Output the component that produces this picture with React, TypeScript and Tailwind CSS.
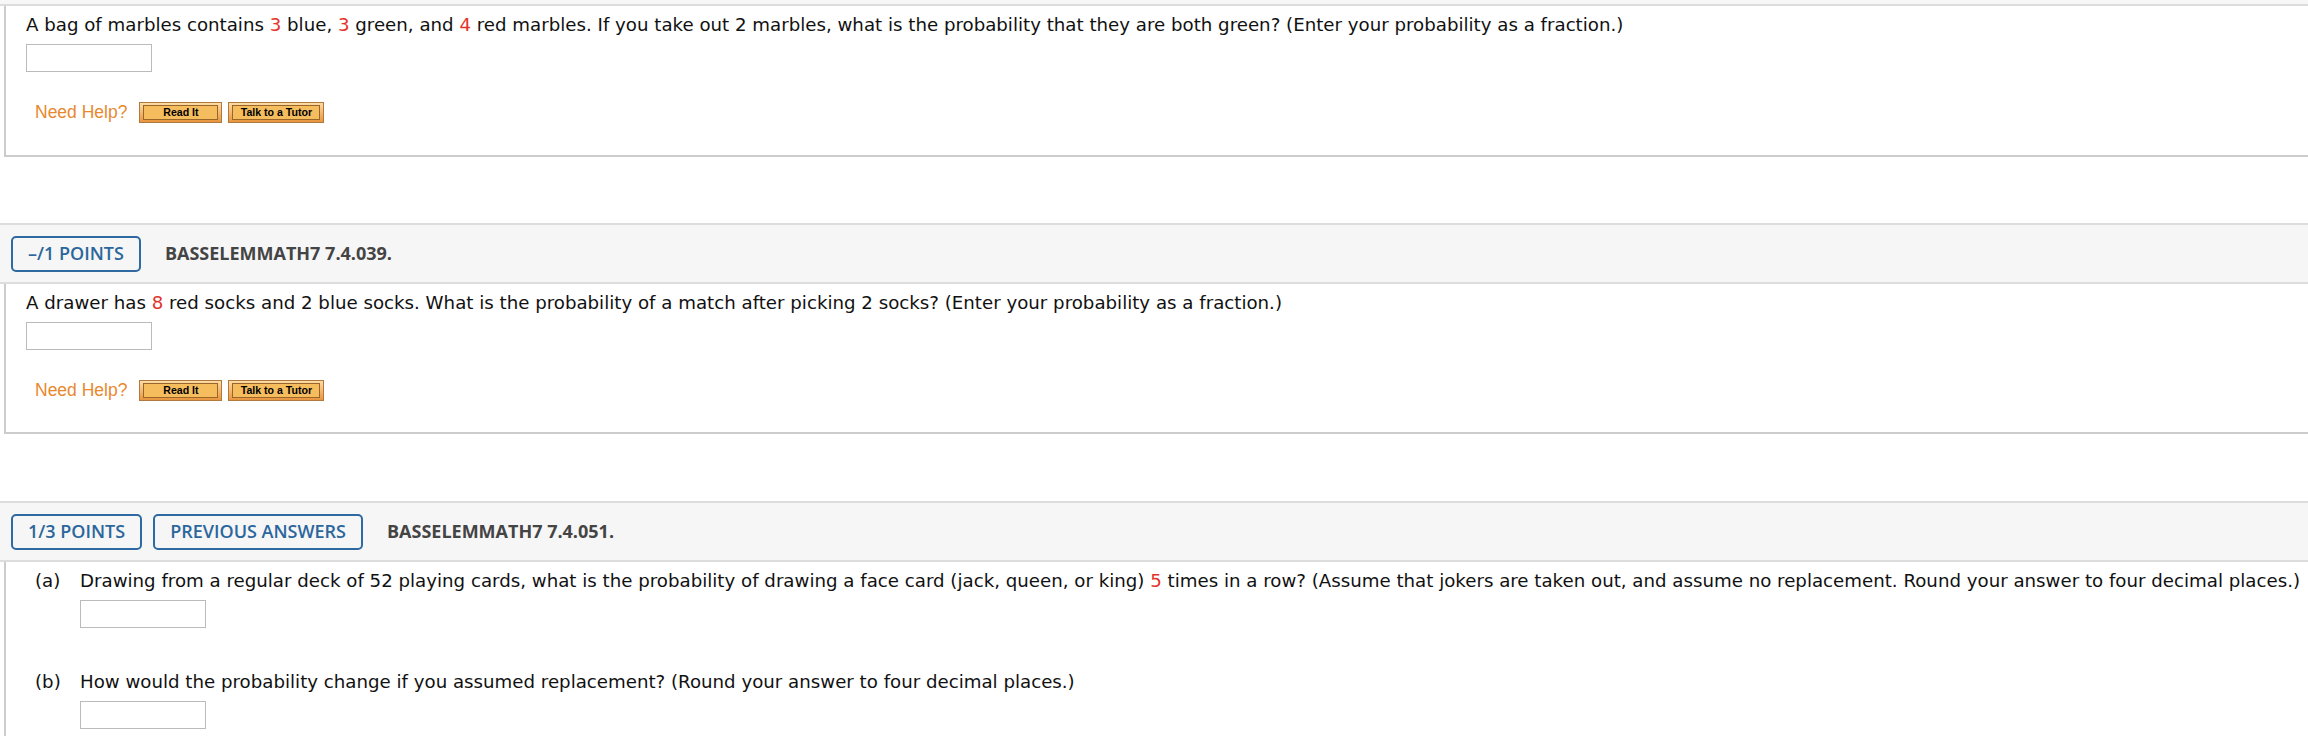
import React from "react";

const R = ({ children }: { children: React.ReactNode }) => (
  <span className="text-[#e3342b]">{children}</span>
);

const HelpButton = ({ label, w }: { label: string; w: string }) => (
  <div
    className={`${w} h-[21px] border border-[#b07a3c] bg-linear-to-b from-[#fcdca6] to-[#e8953c] px-[3px] py-[2px]`}
  >
    <div className="h-full border border-[#9a6628] bg-[#f5bd5e] flex items-center justify-center font-['Liberation_Sans'] font-bold text-[10.6px] leading-none text-black">
      {label}
    </div>
  </div>
);

const NeedHelp = () => (
  <div className="mt-[30px] ml-[9px] flex items-center h-[21px]">
    <span className="font-['Liberation_Sans'] text-[17.5px] leading-none text-[#e8892e] mr-[12px]">
      Need Help?
    </span>
    <HelpButton label="Read It" w="w-[83px]" />
    <div className="w-[6px]" />
    <HelpButton label="Talk to a Tutor" w="w-[96px]" />
  </div>
);

const Input = ({ cls = "" }: { cls?: string }) => (
  <div className={`h-[28px] w-[126px] border border-[#bbbbbb] bg-white ${cls}`} />
);

const Badge = ({ children }: { children: React.ReactNode }) => (
  <div className="h-[36px] px-[15px] border-2 border-[#2e6aa1] rounded-[5px] flex items-center font-['Open_Sans'] font-semibold text-[18px] text-[#2b669c] whitespace-nowrap">
    {children}
  </div>
);

const Header = ({ children, title }: { children: React.ReactNode; title: string }) => (
  <div className="h-[61px] border-y-2 border-[#dddddd] bg-[#f6f6f6] flex items-center pl-[11px]">
    {children}
    <span className="ml-[24px] font-['Open_Sans'] font-bold text-[18px] text-[#444444] whitespace-nowrap">
      {title}
    </span>
  </div>
);

const T = "font-['DejaVu_Sans'] text-[18.2px] leading-[24px] text-[#111111] whitespace-nowrap";

export default function App() {
  return (
    <div className="w-[2308px] h-[736px] overflow-hidden bg-white">
      <div className="h-[6px] bg-[#f7f7f7] border-b-2 border-[#dddddd]" />

      <div className="ml-[4px] border-l-2 border-b-2 border-[#cccccc] pl-[20px] pt-[7px] pb-[32px]">
        <p className={T}>
          A bag of marbles contains <R>3</R> blue, <R>3</R> green, and <R>4</R> red marbles. If you take out 2
          marbles, what is the probability that they are both green? (Enter your probability as a fraction.)
        </p>
        <Input cls="mt-[7px]" />
        <NeedHelp />
      </div>

      <div className="mt-[66px]">
        <Header title="BASSELEMMATH7 7.4.039.">
          <Badge>–/1 POINTS</Badge>
        </Header>
      </div>

      <div className="ml-[4px] border-l-2 border-b-2 border-[#cccccc] pl-[20px] pt-[7px] pb-[31px]">
        <p className={T}>
          A drawer has <R>8</R> red socks and 2 blue socks. What is the probability of a match after picking 2
          socks? (Enter your probability as a fraction.)
        </p>
        <Input cls="mt-[7px]" />
        <NeedHelp />
      </div>

      <div className="mt-[67px]">
        <Header title="BASSELEMMATH7 7.4.051.">
          <Badge>1/3 POINTS</Badge>
          <div className="w-[11px]" />
          <Badge>PREVIOUS ANSWERS</Badge>
        </Header>
      </div>

      <div className="ml-[4px] border-l-2 border-[#cccccc] pl-[29px] pt-[7px] pb-[40px]">
        <div className="grid grid-cols-[45px_1fr]">
          <span className={T}>(a)</span>
          <div>
            <p className={T}>
              Drawing from a regular deck of 52 playing cards, what is the probability of drawing a face card
              (jack, queen, or king) <R>5</R> times in a row? (Assume that jokers are taken out, and assume no
              replacement. Round your answer to four decimal places.)
            </p>
            <Input cls="mt-[7px]" />
          </div>
          <span className={`${T} mt-[42px]`}>(b)</span>
          <div className="mt-[42px]">
            <p className={T}>
              How would the probability change if you assumed replacement? (Round your answer to four decimal
              places.)
            </p>
            <Input cls="mt-[7px]" />
          </div>
        </div>
      </div>
    </div>
  );
}
